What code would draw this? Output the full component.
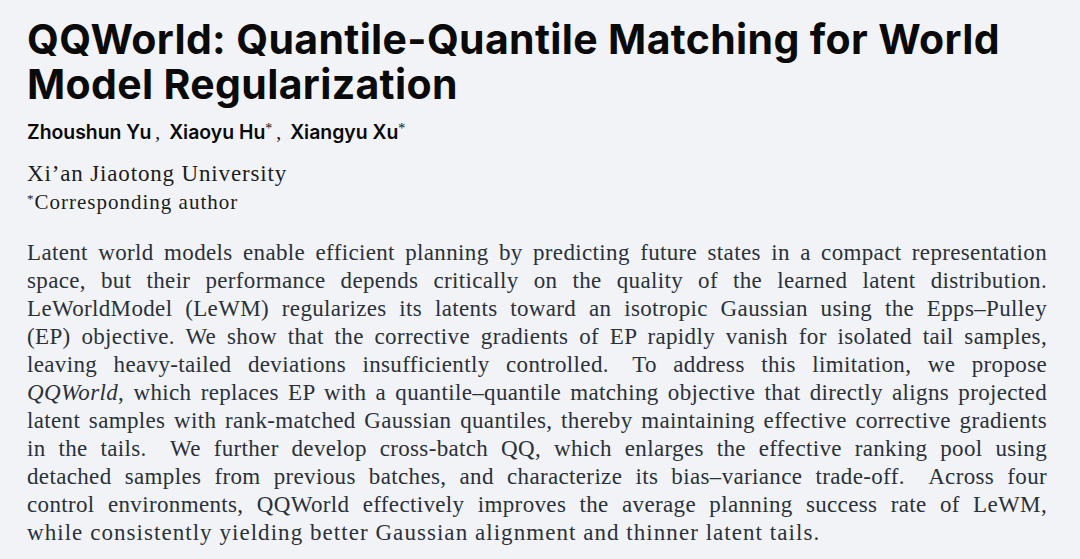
const lines: React.ReactNode[] = [
  "Latent world models enable efficient planning by predicting future states in a compact representation",
  "space, but their performance depends critically on the quality of the learned latent distribution.",
  "LeWorldModel (LeWM) regularizes its latents toward an isotropic Gaussian using the Epps–Pulley",
  "(EP) objective. We show that the corrective gradients of EP rapidly vanish for isolated tail samples,",
  "leaving heavy-tailed deviations insufficiently controlled.\u2003To address this limitation, we propose",
  <>
    <i>QQWorld</i>, which replaces EP with a quantile–quantile matching objective that directly aligns projected
  </>,
  "latent samples with rank-matched Gaussian quantiles, thereby maintaining effective corrective gradients",
  "in the tails.\u2003We further develop cross-batch QQ, which enlarges the effective ranking pool using",
  "detached samples from previous batches, and characterize its bias–variance trade-off.\u2003Across four",
  "control environments, QQWorld effectively improves the average planning success rate of LeWM,",
];

const lastLine = "while consistently yielding better Gaussian alignment and thinner latent tails.";

function Star() {
  return (
    <span className="relative -top-[6px] font-['Liberation_Serif',serif] text-[14px] font-normal leading-none">*</span>
  );
}

function Comma() {
  return <span className="ml-[4px] mr-[9px] font-['Liberation_Serif',serif] font-normal">,</span>;
}

export default function App() {
  return (
    <div className="min-h-[559px] w-[1080px] bg-[#f2f3f7] pl-[27px] pr-[33px] pt-[17px] text-[#111]">
      <h1 className="font-['Inter',sans-serif] text-[41px] font-bold leading-[45px] tracking-[0.35px] text-[#0a0a0a]">
        QQWorld: Quantile-Quantile Matching for World
        <br />
        Model Regularization
      </h1>

      <div className="mt-[13px] font-['Inter',sans-serif] text-[19.4px] font-semibold leading-[24px] text-[#0a0a0a]">
        Zhoushun Yu
        <Comma />
        Xiaoyu Hu
        <Star />
        <Comma />
        Xiangyu Xu
        <Star />
      </div>

      <div className="mt-[15px] font-['Liberation_Serif',serif] text-[23px] leading-[28px] tracking-[0.85px] text-[#1c1c1c]">
        Xi’an Jiaotong University
      </div>
      <div className="mt-[2px] font-['Liberation_Serif',serif] text-[21px] leading-[24px] tracking-[1px] text-[#1c1c1c]">
        <span className="relative -top-[6px] text-[13px]">*</span>Corresponding author
      </div>

      <div className="mt-[22px] font-['Liberation_Serif',serif] text-[23px] leading-[28px] text-[#2a3139]">
        {lines.map((line, i) => (
          <div key={i} className="whitespace-nowrap text-justify tracking-[0.35px] [text-align-last:justify]">
            {line}
          </div>
        ))}
        <div className="whitespace-nowrap tracking-[1.05px]">{lastLine}</div>
      </div>
    </div>
  );
}
